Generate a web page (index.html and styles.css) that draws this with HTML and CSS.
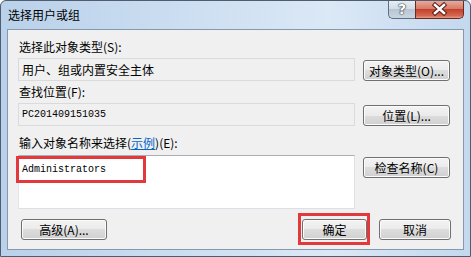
FILE: index.html
```html
<!DOCTYPE html>
<html lang="zh-CN">
<head>
    <meta charset="UTF-8">
    <title>选择用户或组</title>
    <link rel="stylesheet" href="styles.css">
</head>
<body>
    <div class="window">
        <div class="titlebar">
            <span class="title">选择用户或组</span>
            <div class="caption-buttons">
                <div class="cap-btn help">?</div>
                <div class="cap-btn close">
                    <svg width="47" height="17" viewBox="0 0 47 17">
                        <path d="M19 4 L28 12 M28 4 L19 12" stroke="#5a1f18" stroke-width="4.5" stroke-linecap="square"/>
                        <path d="M19 4 L28 12 M28 4 L19 12" stroke="#ffffff" stroke-width="2.5" stroke-linecap="square"/>
                    </svg>
                </div>
            </div>
        </div>

        <div class="panel">
            <div class="label">选择此对象类型(S):</div>
            <div class="row">
                <div class="field readonly">用户、组或内置安全主体</div>
                <button class="btn side">对象类型(O)...</button>
            </div>

            <div class="label gap-small">查找位置(F):</div>
            <div class="row">
                <div class="field readonly mono">PC201409151035</div>
                <button class="btn side">位置(L)...</button>
            </div>

            <div class="label gap-large">输入对象名称来选择(<a href="#" class="link">示例</a>)(E):</div>
            <div class="row top">
                <div class="names">
                    <span class="mono">Administrators</span>
                    <div class="mark mark-names"></div>
                </div>
                <button class="btn side check">检查名称(C)</button>
            </div>

            <div class="bottom">
                <button class="btn advanced">高级(A)...</button>
                <div class="ok-wrap">
                    <button class="btn ok">确定</button>
                    <div class="mark mark-ok"></div>
                </div>
                <button class="btn cancel">取消</button>
            </div>
        </div>
    </div>
</body>
</html>
```

FILE: styles.css
```css
body {
    margin: 0;
    font-family: "Noto Sans CJK SC", "Noto Sans", sans-serif;
    font-size: 12px;
    color: #000;
}
.window {
    width: 471px;
    height: 257px;
    box-sizing: border-box;
    border: 1px solid #4f5d6e;
    border-radius: 6px 6px 0 0;
    background: linear-gradient(to right, #b9d1ea, #cfe0f2 45%, #dbe8f6 70%, #c4d8ee);
    padding: 0 6px 6px 6px;
    display: flex;
    flex-direction: column;
}
.titlebar {
    height: 28px;
    display: flex;
    align-items: flex-start;
}
.title {
    margin: 6px 0 0 1px;
    line-height: 16px;
    font-size: 12px;
}
.caption-buttons {
    margin-left: auto;
    display: flex;
}
.cap-btn {
    height: 18px;
    box-sizing: border-box;
    border: 1px solid #5f6f82;
    border-top: none;
}
.help {
    width: 27px;
    border-radius: 0 0 0 5px;
    border-right: none;
    background: linear-gradient(#e6edf4, #d2dde8 45%, #b8c6d4 50%, #c9d6e2);
    color: #fff;
    font: bold 14px "DejaVu Sans", sans-serif;
    line-height: 17px;
    text-align: center;
    text-shadow: 0 0 1px #333, 0 0 1px #333, 0 0 2px #555;
}
.close {
    width: 49px;
    border-radius: 0 0 5px 0;
    border-color: #6a2a22;
    background: linear-gradient(#e9a99c, #d77a68 45%, #c2422c 50%, #d4654f 85%, #e59a85);
}
.close svg {
    display: block;
}
.panel {
    flex: 1;
    border: 1px solid #8598ae;
    background: #f0f0f0;
    padding: 10px 12px 0 10px;
}
.label {
    line-height: 14px;
    margin-left: 1px;
}
.gap-small {
    margin-top: 4px;
}
.gap-large {
    margin-top: 10px;
}
.link {
    color: #0066cc;
    text-decoration: underline;
}
.row {
    display: flex;
    align-items: flex-end;
    gap: 8px;
    margin-top: 4px;
}
.row.top {
    align-items: flex-start;
    margin-top: 5px;
}
.field {
    width: 337px;
    height: 23px;
    box-sizing: border-box;
    padding: 0 3px;
    line-height: 21px;
}
.readonly {
    border: 1px solid #d8dadc;
    background: #f0f0f0;
}
.mono {
    font-family: "Liberation Mono", monospace;
    font-size: 10px;
}
.names {
    position: relative;
    width: 337px;
    height: 54px;
    box-sizing: border-box;
    background: #fff;
    border: 1px solid #dbdfe6;
    border-top-color: #abadb3;
    border-left-color: #e2e3ea;
    padding: 4px 3px;
    line-height: 14px;
}
.mark {
    position: absolute;
    box-sizing: border-box;
    border: 3px solid #e23a3c;
}
.mark-names {
    left: -3px;
    top: 0;
    width: 130px;
    height: 27px;
}
.btn {
    font-family: inherit;
    font-size: 12px;
    height: 21px;
    box-sizing: border-box;
    padding: 0;
    color: #000;
    border: 1px solid #707070;
    border-radius: 3px;
    background: linear-gradient(#f3f3f3 0%, #ebebeb 50%, #dddddd 50%, #d0d0d0 100%);
    box-shadow: inset 0 0 0 1px #fbfbfb;
    cursor: pointer;
    white-space: nowrap;
}
.side {
    width: 87px;
}
.check {
    margin-top: 2px;
}
.bottom {
    display: flex;
    margin-top: 10px;
}
.advanced {
    width: 86px;
    margin-left: 3px;
}
.ok-wrap {
    position: relative;
    margin-left: auto;
}
.ok {
    width: 65px;
}
.mark-ok {
    left: -4px;
    top: -6px;
    width: 72px;
    height: 32px;
}
.cancel {
    width: 72px;
    margin-left: 12px;
}
```
